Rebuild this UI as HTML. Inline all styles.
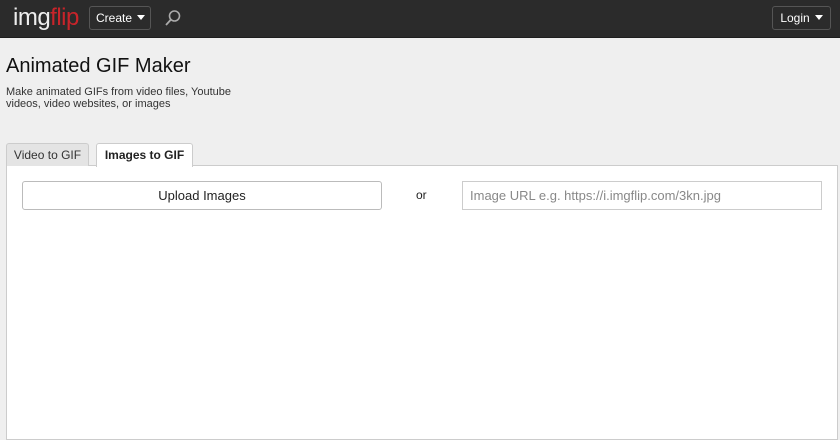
<!DOCTYPE html>
<html><head><style>
*{box-sizing:border-box;margin:0;padding:0}
body{width:840px;height:440px;background:#efefef;font-family:"Liberation Sans",Arial,sans-serif;position:relative;overflow:hidden}
.nav{position:absolute;left:0;top:0;width:840px;height:38px;background:#2b2b2b;border-bottom:1px solid #1e1e1e}
.logo{position:absolute;left:13px;top:4px;font-size:24px;color:#eee;letter-spacing:-0.5px}
.logo span{color:#c8242a}
.btn{position:absolute;border:1px solid #555;border-radius:3px;color:#fff;font-size:12px;height:24px;line-height:22px;padding:0 6px;background:#2b2b2b;white-space:nowrap;text-align:center}
.tri{display:inline-block;width:0;height:0;border-left:4px solid transparent;border-right:4px solid transparent;border-top:5px solid #fff;margin-left:5px;vertical-align:2px}
h1{position:absolute;left:6px;top:55px;font-size:20px;font-weight:normal;color:#111}
.desc{position:absolute;left:6px;top:86px;font-size:11px;line-height:12px;color:#333;width:240px}
.tab{position:absolute;top:143px;height:23px;font-size:12px;line-height:22px;text-align:center;border:1px solid #ccc;border-bottom:none;border-radius:3px 3px 0 0}
.panel{position:absolute;left:6px;top:165px;width:832px;height:275px;background:#fff;border:1px solid #ccc}
.up{position:absolute;left:22px;top:181px;width:360px;height:29px;border:1px solid #bbb;border-radius:3px;text-align:center;line-height:27px;font-size:13px;color:#222;background:#fff}
.url{position:absolute;left:462px;top:181px;width:360px;height:29px;border:1px solid #ccc;line-height:27px;padding-left:7px;font-size:13px;color:#888}
</style></head><body>
<div class="nav">
<div class="logo">img<span>flip</span></div>
<div class="btn" style="left:89px;top:6px;width:62px">Create<span class="tri"></span></div>
<svg style="position:absolute;left:164px;top:9px" width="18" height="18" viewBox="0 0 18 18"><circle cx="10.5" cy="7" r="5" fill="none" stroke="#aaa" stroke-width="1.6"/><line x1="7" y1="10.5" x2="2" y2="16" stroke="#aaa" stroke-width="1.8"/></svg>
<div class="btn" style="left:772px;top:6px;width:59px">Login<span class="tri"></span></div>
</div>
<h1>Animated GIF Maker</h1>
<div class="desc">Make animated GIFs from video files, Youtube videos, video websites, or images</div>
<div class="panel"></div>
<div class="tab" style="left:6px;width:83px;background:#e4e4e4;color:#333">Video to GIF</div>
<div class="tab" style="left:96px;width:97px;background:#fff;font-weight:bold;color:#222;height:24px">Images to GIF</div>
<div class="up">Upload Images</div>
<div style="position:absolute;left:416px;top:188px;font-size:12px;color:#222">or</div>
<div class="url">Image URL e.g. https://i.imgflip.com/3kn.jpg</div>
</body></html>
